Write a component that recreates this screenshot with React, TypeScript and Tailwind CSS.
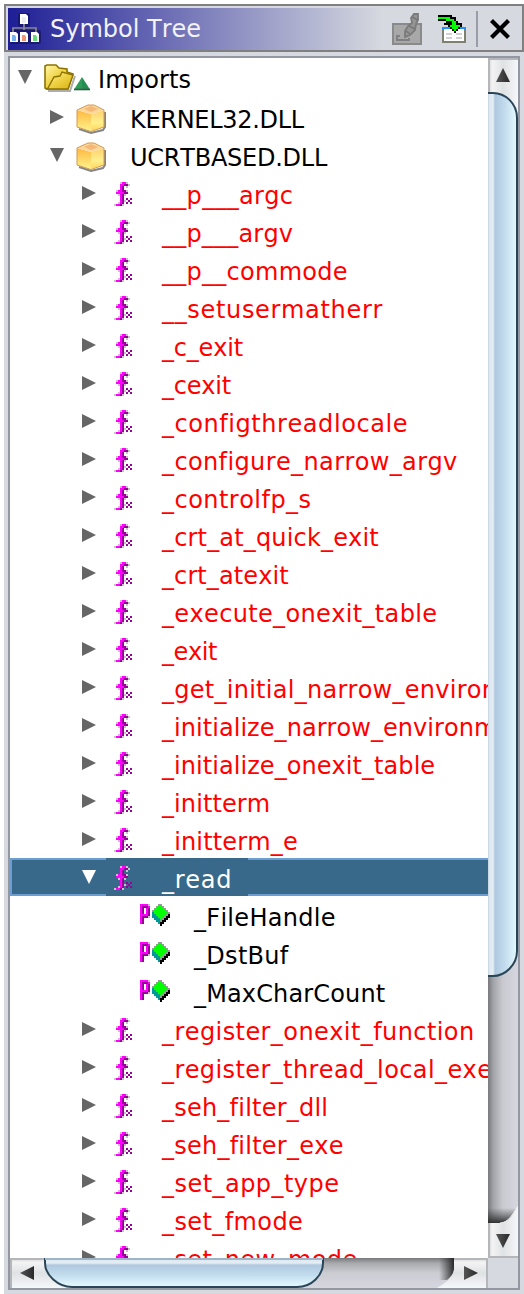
import React from "react";

const COLORS: Record<string, string> = {
  m: "#ff00ff",
  p: "#990099",
  g: "#c9c3c9",
  a: "#999999",
  l: "#00ff00",
  t: "#009999",
  k: "#000000",
  d: "#808070",
  w: "#ffffff",
  s: "#d0d0d0",
  b: "#1e8fff",
};

function Pixels({ rows, className }: { rows: string[]; className: string }) {
  return (
    <svg
      className={className}
      width={rows[0].length * 2}
      height={rows.length * 2}
      viewBox={`0 0 ${rows[0].length} ${rows.length}`}
      shapeRendering="crispEdges"
    >
      {rows.flatMap((row, y) =>
        [...row].map((c, x) =>
          c === "." ? null : <rect key={`${x}-${y}`} x={x} y={y} width="1" height="1" fill={COLORS[c]} />,
        ),
      )}
    </svg>
  );
}

const FUNCTION_ROWS = [
  "...gmmg..",
  "...mmppg.",
  "...mp.g..",
  "...mp....",
  ".gmmppg..",
  ".mmmmpp..",
  "..gmpg...",
  "...mp....",
  "...mp.p.p",
  "...mpg.p.",
  "..gmp.p.p",
  "gmmpg....",
];

const PARAM_ROWS = [
  "mmmmg....aa....",
  "mpppm...alla...",
  "mp.mp..alllla..",
  "mp.mp.alllllla.",
  "mp.mp.tllllllla",
  "mmmmp.ttlllllak",
  "mpppg.tttlllakk",
  "mp.....tttlakk.",
  "mp......ttakk..",
  "mp.......tkk...",
  "..........k....",
];

const TABLE_ROWS = [
  "kkkkkkk.......",
  "llllllkkk.....",
  "kkkkllllk.....",
  "....kkkllk....",
  "...kkkkllkkk..",
  ".....klllllk..",
  "..bbbbklllkbbb",
  "..dwwwwklkwwwd",
  "..dwwwwwkwwwwd",
  "..dwssswwssswd",
  "..dwwwwwwwwwwd",
  "..dwssswwssswd",
  "..dwwwwwwwwwwd",
  "..dddddddddddd",
];

function Arrow({ open, selected }: { open?: boolean; selected?: boolean }) {
  return (
    <svg className="mt-3 shrink-0" width="14" height="14" viewBox="0 0 14 14">
      <path d={open ? "M0 0H14L7 14Z" : "M0 0V14L14 7Z"} fill={selected ? "#fff" : "#666"} />
    </svg>
  );
}

function Folder() {
  return (
    <svg className="mt-[5px] ml-3 shrink-0" width="48" height="30" viewBox="0 0 48 30">
      <defs>
        <linearGradient id="folder" x2="1" y2="1">
          <stop stopColor="#fff7a8" />
          <stop offset=".45" stopColor="#f0d448" />
          <stop offset="1" stopColor="#d9b010" />
        </linearGradient>
      </defs>
      <path d="M4 28H26L31 13" fill="none" stroke="#777" strokeOpacity=".6" strokeWidth="2" />
      <path d="M1 3L3 2H12L15 5L23 6V9L29 11L24 26H3L1 25Z" fill="url(#folder)" stroke="#8d7300" strokeWidth="1.6" />
      <path d="M4 25L10 14L16 13L18 9L29 12L24 26H3Z" fill="url(#folder)" stroke="#8d7300" strokeWidth="1.4" />
      <path d="M38 14L46 26.5H30Z" fill="#2e9c5a" />
      <path d="M38 15V26.5H46Z" fill="#1c7b42" fillOpacity=".4" />
      <path d="M30 26.5H46" stroke="#315d43" strokeWidth="1.6" />
    </svg>
  );
}

function Box() {
  return (
    <svg className="mt-[5px] ml-3 shrink-0" width="32" height="32" viewBox="0 0 32 32">
      <defs>
        <linearGradient id="boxleft" x2="0" y2="1">
          <stop stopColor="#ffb640" />
          <stop offset="1" stopColor="#fff48c" />
        </linearGradient>
        <linearGradient id="boxright" x2="0" y2="1">
          <stop stopColor="#ffd070" />
          <stop offset=".6" stopColor="#fff08c" />
          <stop offset="1" stopColor="#ffd65c" />
        </linearGradient>
      </defs>
      <path d="M3 26L15 30L27 27L29 24V9" fill="none" stroke="#444" strokeOpacity=".65" strokeWidth="2" />
      <path d="M1 7L15 11V28L1 24Z" fill="url(#boxleft)" />
      <path d="M15 11L28 7V24L15 28Z" fill="url(#boxright)" />
      <path d="M1 7L12 2H18L28 7L15 11Z" fill="#fcd79a" />
      <path d="M8 6L15 3L22 6L15 9Z" fill="#f5b878" />
      <path d="M1 7L12 2H18L28 7V24L15 28.5L1 24Z" fill="none" stroke="#d09a50" strokeWidth="1" />
    </svg>
  );
}

function TreeIcon() {
  const doc = (x: number, y: number, color: string) => (
    <g>
      <path d={`M${x} ${y}h6l2 2v8h-8Z`} fill="#fff" />
      <path d={`M${x + 2} ${y + 3}h3l1 2v4h-4Z`} fill={color} />
    </g>
  );
  return (
    <svg className="ml-0.5 shrink-0" width="32" height="34" viewBox="0 0 32 34">
      <g fill="#111159" fillOpacity=".6">
        <rect x="8" y="1" width="12" height="14" rx="2" />
        <rect x="0" y="18" width="31" height="14" rx="2" />
      </g>
      <path d="M14 12V18M3 20V16H26V20" fill="none" stroke="#888894" strokeWidth="1.7" />
      {doc(10, 2, "#ededed")}
      {doc(0, 20, "#77b4ed")}
      {doc(10, 20, "#ee9573")}
      {doc(21, 20, "#66db77")}
    </svg>
  );
}

function EditIcon() {
  return (
    <svg className="-ml-px shrink-0" width="32" height="34" viewBox="0 0 32 34">
      <rect x="3" y="12" width="28" height="20" fill="#a8a8a8" stroke="#8a8a8a" strokeWidth="2" />
      <path d="M10 24H7V28H19V26" fill="none" stroke="#808080" strokeWidth="2" />
      <path d="M15 25V19L18 14L22 11L21 6L24 2H28V8L26 12L25 18L20 23Z" fill="#959595" stroke="#7b7b7b" strokeWidth="1.8" />
      <path d="M16 19L20 22M19 14L25 17M22 5L28 8" stroke="#777" strokeWidth="1.5" />
    </svg>
  );
}

type Kind = "folder" | "box" | "fn" | "param";

const INDENT: Record<Kind, string> = {
  folder: "pl-2",
  box: "pl-10",
  fn: "pl-[72px]",
  param: "pl-[130px]",
};

const LABEL_GAP: Record<Kind, string> = { folder: "ml-1.5", box: "ml-[22px]", fn: "", param: "" };

type RowProps = { kind: Kind; label: string; open?: boolean; tracking?: string };

function Row({ kind, label, open, tracking = "" }: RowProps) {
  const color = kind === "fn" ? "text-[#ff0000]" : "text-black";
  return (
    <div className={`flex shrink-0 items-start whitespace-nowrap ${INDENT[kind]} ${color} ${kind === "folder" ? "h-10" : "h-[38px]"}`}>
      {kind !== "param" && <Arrow open={open} />}
      {kind === "folder" && <Folder />}
      {kind === "box" && <Box />}
      {kind === "fn" && <Pixels rows={FUNCTION_ROWS} className="mt-2 mr-[30px] ml-[18px] shrink-0" />}
      {kind === "param" && <Pixels rows={PARAM_ROWS} className="mt-2 mr-[24px] shrink-0" />}
      <span className={`mt-[3px] leading-[38px] ${LABEL_GAP[kind]} ${tracking}`}>{label}</span>
    </div>
  );
}

function SelectedRow() {
  return (
    <div className="flex h-[38px] shrink-0 bg-[#39698a] text-white">
      <div className="flex w-24 shrink-0 border-y-2 border-l-2 border-[#6d9ed1] pl-[70px]">
        <div className="-mt-0.5"><Arrow open selected /></div>
      </div>
      <div className="flex w-[142px] shrink-0 pl-2">
        <Pixels rows={FUNCTION_ROWS} className="mt-2 mr-[30px] shrink-0" />
        <span className="mt-[3px] leading-[38px] tracking-[0.7px]">_read</span>
      </div>
      <div className="grow border-y-2 border-[#6d9ed1]" />
    </div>
  );
}

function VerticalScroll() {
  return (
    <svg className="block shrink-0" width="30" height="1200" viewBox="0 0 30 1200">
      <defs>
        <linearGradient id="vtrack">
          <stop stopColor="#77797c" />
          <stop offset=".18" stopColor="#a2a4a9" />
          <stop offset=".5" stopColor="#c9cbd1" />
          <stop offset="1" stopColor="#d6d6df" />
        </linearGradient>
        <linearGradient id="vthumb">
          <stop stopColor="#9db2c5" />
          <stop offset=".07" stopColor="#dce8f1" />
          <stop offset=".2" stopColor="#e5edf4" />
          <stop offset=".27" stopColor="#aec8df" />
          <stop offset=".6" stopColor="#c3dced" />
          <stop offset="1" stopColor="#e5fbff" />
        </linearGradient>
        <linearGradient id="vbutton">
          <stop stopColor="#d1d2d4" />
          <stop offset=".15" stopColor="#f3f3f4" />
          <stop offset=".5" stopColor="#dfe2e4" />
          <stop offset="1" stopColor="#f5f7f9" />
        </linearGradient>
        <linearGradient id="vshade" x2="0" y2="1">
          <stop stopColor="#333" stopOpacity="0" />
          <stop offset="1" stopColor="#222" stopOpacity=".9" />
        </linearGradient>
        <linearGradient id="arrow" x2="1">
          <stop stopColor="#555" />
          <stop offset="1" stopColor="#292929" />
        </linearGradient>
      </defs>
      <rect width="30" height="1200" fill="url(#vtrack)" />
      <rect width="30" height="56" fill="url(#vbutton)" />
      <path d="M0 1H30M1 0V34" stroke="#b4b6b9" strokeWidth="2" />
      <path d="M15 10L22 24H8Z" fill="url(#arrow)" />
      <path d="M-1 35H5C17 35 29 45 29 60V893C29 907 17 918 5 918H-1Z" fill="url(#vthumb)" stroke="#2b4558" strokeWidth="2" />
      <path d="M0 1150H30V1155C24 1161 20 1165 12 1165H0Z" fill="url(#vshade)" />
      <path d="M0 1165H12C20 1165 26 1156 30 1148V1200H0Z" fill="url(#vbutton)" />
      <path d="M12 1165C20 1165 25 1156 30 1148" fill="none" stroke="#f4f4f5" />
      <path d="M1 1165V1199H30" fill="none" stroke="#b4b6b9" strokeWidth="2" />
      <path d="M8 1176H22L15 1190Z" fill="url(#arrow)" />
    </svg>
  );
}

function HorizontalScroll() {
  return (
    <svg className="block shrink-0" width="478" height="30" viewBox="0 0 478 30">
      <defs>
        <linearGradient id="htrack" x2="0" y2="1">
          <stop stopColor="#77797c" />
          <stop offset=".18" stopColor="#a9abaf" />
          <stop offset=".5" stopColor="#cbcdd3" />
          <stop offset="1" stopColor="#d6d6df" />
        </linearGradient>
        <linearGradient id="hthumb" x2="0" y2="1">
          <stop stopColor="#9db2c5" />
          <stop offset=".07" stopColor="#dce8f1" />
          <stop offset=".2" stopColor="#e5edf4" />
          <stop offset=".27" stopColor="#aec8df" />
          <stop offset=".6" stopColor="#c3dced" />
          <stop offset="1" stopColor="#e5fbff" />
        </linearGradient>
        <linearGradient id="hbutton" x2="0" y2="1">
          <stop stopColor="#d1d2d4" />
          <stop offset=".15" stopColor="#f3f3f4" />
          <stop offset=".5" stopColor="#dfe2e4" />
          <stop offset="1" stopColor="#f5f7f9" />
        </linearGradient>
        <linearGradient id="hshade">
          <stop stopColor="#333" stopOpacity="0" />
          <stop offset="1" stopColor="#222" stopOpacity=".95" />
        </linearGradient>
      </defs>
      <rect width="478" height="30" fill="url(#htrack)" />
      <rect width="65" height="30" fill="url(#hbutton)" />
      <path d="M0 1H34M1 0V30" stroke="#b4b6b9" strokeWidth="2" />
      <path d="M10 15L24 8V22Z" fill="url(#arrow)" />
      <path d="M35 -1V5C35 17 48 29 62 29H287C302 29 313 17 313 5V-1Z" fill="url(#hthumb)" stroke="#2b4558" strokeWidth="2" />
      <path d="M35 1H313" stroke="#9eb5c8" strokeWidth="2" />
      <path d="M429 0H444V12C443 17 440 19 437 22H429Z" fill="url(#hshade)" />
      <path d="M444 0V10C444 20 435 25 427 30H478V0Z" fill="url(#hbutton)" />
      <path d="M444 1H477V30" fill="none" stroke="#b4b6b9" strokeWidth="2" />
      <path d="M454 8L468 15L454 22Z" fill="url(#arrow)" />
    </svg>
  );
}

const BEFORE = [
  ["__p___argc", "tracking-[0.3px]"],
  ["__p___argv", "tracking-[0.2px]"],
  ["__p__commode", "tracking-[0.27px]"],
  ["__setusermatherr", "tracking-[0.67px]"],
  ["_c_exit", "tracking-[-0.2px]"],
  ["_cexit", "tracking-[-0.2px]"],
  ["_configthreadlocale", "tracking-[0.56px]"],
  ["_configure_narrow_argv", "tracking-[0.38px]"],
  ["_controlfp_s", "tracking-[0.47px]"],
  ["_crt_at_quick_exit", "tracking-[0.17px]"],
  ["_crt_atexit", "tracking-[0.1px]"],
  ["_execute_onexit_table", "tracking-[0.35px]"],
  ["_exit", "tracking-[-0.4px]"],
  ["_get_initial_narrow_environment", "tracking-[0.27px]"],
  ["_initialize_narrow_environment", "tracking-[0.05px]"],
  ["_initialize_onexit_table", "tracking-[0.06px]"],
  ["_initterm", "tracking-[0.1px]"],
  ["_initterm_e", "tracking-[0.15px]"],
];
const PARAMS = [
  ["_FileHandle", "tracking-[0.3px]"],
  ["_DstBuf", "tracking-[0.3px]"],
  ["_MaxCharCount", "tracking-[0.15px]"],
];
const AFTER = [
  ["_register_onexit_function", "tracking-[0.42px]"],
  ["_register_thread_local_exe", "tracking-[0.4px]"],
  ["_seh_filter_dll", "tracking-[0.22px]"],
  ["_seh_filter_exe", "tracking-[0.24px]"],
  ["_set_app_type", "tracking-[0.46px]"],
  ["_set_fmode", "tracking-[0.4px]"],
  ["_set_new_mode", "tracking-[0.4px]"],
];

export default function App() {
  return (
    <div className="h-[1294px] w-[524px] overflow-hidden bg-white pt-1 pl-1 font-['DejaVu_Sans',sans-serif] text-[24px] [font-kerning:none] [font-variant-ligatures:none]">
      <div className="flex h-[1290px] flex-col bg-[#d6d9df]">
        <header className="h-12 shrink-0 border-2 border-[#808080] pt-0.5 pl-0.5">
          <div className="flex h-[42px] items-center bg-[linear-gradient(90deg,#1e1e96_0px,#d6d9df_374px)]">
            <TreeIcon />
            <h1 className="ml-2 grow leading-[42px] text-[#f2f2f8]">Symbol Tree</h1>
            <div className="mr-3 flex items-center">
              <EditIcon />
              <Pixels rows={TABLE_ROWS} className="mr-2.5 ml-4" />
              <div className="mr-3 h-9 w-0.5 bg-[#9a9da7]" />
              <svg width="20" height="20" viewBox="0 0 20 20">
                <path d="M1.5 1.5L18.5 18.5M18.5 1.5L1.5 18.5" stroke="#000" strokeWidth="4.2" />
              </svg>
            </div>
          </div>
        </header>
        <main className="mt-1 ml-1 h-[1234px] w-[512px] shrink-0 border-2 border-[#9297a1]">
          <div className="flex h-[1200px]">
            <div className="flex w-[478px] shrink-0 flex-col overflow-hidden bg-white">
              <Row kind="folder" label="Imports" tracking="tracking-[0.15px]" open />
              <Row kind="box" label="KERNEL32.DLL" tracking="tracking-[-0.3px]" />
              <Row kind="box" label="UCRTBASED.DLL" tracking="tracking-[-0.25px]" open />
              {BEFORE.map(([n, t]) => <Row key={n} kind="fn" label={n} tracking={t} />)}
              <SelectedRow />
              {PARAMS.map(([n, t]) => <Row key={n} kind="param" label={n} tracking={t} />)}
              {AFTER.map(([n, t]) => <Row key={n} kind="fn" label={n} tracking={t} />)}
            </div>
            <VerticalScroll />
          </div>
          <HorizontalScroll />
        </main>
      </div>
    </div>
  );
}
